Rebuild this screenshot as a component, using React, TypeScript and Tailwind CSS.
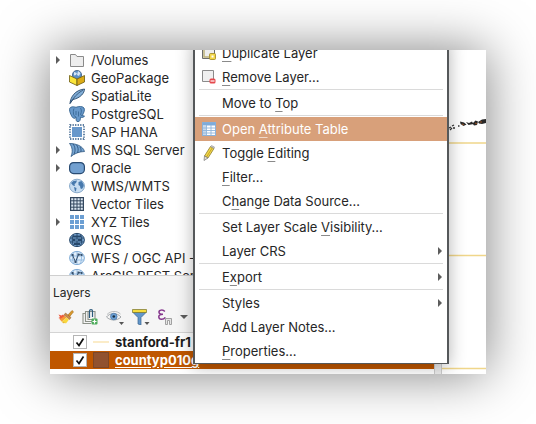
import React from "react";

function Folder() {
  return (
    <svg viewBox="0 0 16 16" className="size-4">
      <path d="M1.500 2.500h5l1.500 2h6.500v10h-13z" fill="#ededed" stroke="#8a8a8a" />
    </svg>
  );
}

function GeoPackage() {
  return (
    <svg viewBox="0 0 16 16" className="size-4">
      <circle cx="8" cy="5" r="4.600" fill="#5b8fc6" stroke="#2c4e74" strokeWidth=".7" />
      <path d="M5 2l3 1-1 2-2 .5zM9 1l2.500 2-1.500 3-2-1z" fill="#d7e6f5" />
      <path d="M.5 5.500L8 9v6.500L.5 12z" fill="#fbe53a" stroke="#6b5a10" strokeWidth=".8" />
      <path d="M15.500 5.500L8 9v6.500l7.500-3.500z" fill="#dcab16" stroke="#6b5a10" strokeWidth=".8" />
    </svg>
  );
}

function Feather() {
  return (
    <svg viewBox="0 0 16 16" className="size-4">
      <path d="M1 15.500C1.500 9 6 2 15.500 1c0 4-4 9-11.500 10.500z" fill="#83afd8" stroke="#29496b" strokeWidth=".9" />
      <path d="M1 15.500C4 10 8 5.500 14 2" fill="none" stroke="#29496b" strokeWidth=".8" />
    </svg>
  );
}

function Elephant() {
  return (
    <svg viewBox="0 0 16 16" className="size-4">
      <path
        d="M2 1.200C4 .3 5.500 1 7 1.300 9.500.3 13.500 0 15 2c1.200 2-.5 5.500-1.800 7.500 1 .5 2 .2 2.300.5-.5 1.300-2.500 1.800-4 1.200-.2 2.500-.3 4.300-2.500 4.500-2 0-2-2-2-4.500-.5.800-1.500 1.500-2.500 1C2.500 11 .5 6 .5 3.500c0-1 .5-2 1.500-2.300z"
        fill="#6899cb"
        stroke="#34638f"
        strokeWidth=".9"
      />
      <path d="M5 2.500c-1 2-.6 4-.4 6 .1 1.500 1.400 1.500 2.400 2.500M11.500 2c1.200 2 1 4 .2 6-.3 1 .2 1.500 1.500 1.500M7 5v4M9.500 5.500v5" fill="none" stroke="#34638f" strokeWidth=".8" />
    </svg>
  );
}

function Chip() {
  return (
    <svg viewBox="0 0 16 16" className="size-4">
      <rect x="3" y="3" width="10" height="10" fill="#6898cb" />
      <rect x="1" y="1" width="14" height="14" fill="none" stroke="#24507f" strokeWidth="1.400" strokeDasharray="1.300 1.240" />
    </svg>
  );
}

function SqlServer() {
  return (
    <svg viewBox="0 0 16 16" className="size-4">
      <path d="M.5 1.500C7 1.500 14 4 15.500 9.500 11 9.500 5 11.500 2 14.500 4 10 3.500 5 .5 1.500z" fill="#77a5d2" stroke="#2c557f" strokeWidth=".8" />
      <path d="M4 2c2.500 3 2.500 7 1 10.500M7.500 3c2 2.500 2 5 1 8M11 5c1.200 2 1.200 3.500.8 5" fill="none" stroke="#2c557f" strokeWidth=".9" />
    </svg>
  );
}

function Oracle() {
  return (
    <svg viewBox="0 0 16 16" className="size-4">
      <rect x=".6" y="2.600" width="14.800" height="11" rx="4" fill="#72a0d0" stroke="#2a4c73" strokeWidth="1.200" />
    </svg>
  );
}

function Globe() {
  return (
    <svg viewBox="0 0 16 16" className="size-4">
      <ellipse cx="8" cy="8" rx="7.500" ry="6.800" fill="#c6dcf1" stroke="#7098bf" strokeWidth=".8" />
      <path d="M2 5l2.500-2L8 2.500 7 5 5.500 6 6 8 4 7.500zM5 9l2.500 1L7 13l-1 .5zM9.500 4l3-1 2 3 .3 2-1.800 3-1.500-.5L11 8 9.500 7zM12 12l1-1" fill="#4779ad" />
    </svg>
  );
}

function VectorTiles() {
  return (
    <svg viewBox="0 0 16 16" className="size-4">
      <rect x="1.600" y="1.600" width="12.800" height="12.800" fill="#dbe7f2" stroke="#33475e" strokeWidth="1.200" />
      <path d="M4.800 1v14M8 1v14M11.200 1v14M1 4.800h14M1 8h14M1 11.200h14" stroke="#33475e" strokeWidth="1" />
    </svg>
  );
}

function XyzTiles() {
  return (
    <svg viewBox="0 0 16 16" className="size-4" fill="#6c9fd3">
      {[1, 6, 11].map((y) => [1, 6, 11].map((x) => <rect key={`${x}-${y}`} x={x} y={y} width="4" height="4" />))}
    </svg>
  );
}

function DarkGlobe() {
  return (
    <svg viewBox="0 0 16 16" className="size-4">
      <ellipse cx="8" cy="8" rx="7.400" ry="6.600" fill="#7fabd8" stroke="#27486b" strokeWidth="1" />
      <path d="M1 6h14M1 10h14M8 1.500v13M4.500 2.500c-1.800 3.500-1.800 7.500 0 11M11.500 2.500c1.800 3.500 1.800 7.500 0 11" fill="none" stroke="#27486b" strokeWidth="1" />
      <path d="M4 3.500h8v1.500H4zM3.500 7h3v2h-3zM9 7h4v2H9zM5 11h6v2H5z" fill="#27486b" />
    </svg>
  );
}

function FeatureGlobe() {
  return (
    <svg viewBox="0 0 16 16" className="size-4">
      <ellipse cx="8" cy="8" rx="7.400" ry="6.600" fill="#e3effa" stroke="#6fa0d0" strokeWidth=".9" />
      <path d="M1 6h14M1 10h14M8 1.500v13M5 2c-2 4-2 8 0 12M11 2c2 4 2 8 0 12" fill="none" stroke="#86b1dc" strokeWidth=".8" />
      <path d="M3.500 5l3 7 3-7.500 3 .5" fill="none" stroke="#35506e" strokeWidth="1" />
      <path d="M2.500 4h2v2h-2zM5.500 11h2v2h-2zM8.500 3.500h2v2h-2zM12 4h1.500v2H12z" fill="#35506e" />
    </svg>
  );
}

function Triangle() {
  return (
    <svg viewBox="0 0 4 8" className="h-2 w-1" fill="#5c5c5c">
      <path d="M0 0l4 4-4 4z" />
    </svg>
  );
}

function Brush() {
  return (
    <svg viewBox="0 0 16 16" className="size-4">
      <path d="M9.500 6.500L14 1.500l1.500 1.300-4 5z" fill="#d99a2b" stroke="#a56a13" strokeWidth=".6" />
      <path d="M7.500 4l5.500 4.500-1.500 2-5.500-4.500z" fill="#c98a4a" stroke="#8d5a25" strokeWidth=".5" />
      <path d="M.5 5.500l3 1L5 5.500l2 2-3.500 3-3-1.500 1.500-1z" fill="#ef5b3c" />
      <path d="M6.500 7l2 1.500-4.500 4-2.500-2z" fill="#f59a36" />
      <path d="M8.500 8.500l2.500 2-3 4-4-2z" fill="#f8d83f" />
      <path d="M3 12.500l4 .5-1 1.500z" fill="#e8b52f" />
    </svg>
  );
}

function AddGroup() {
  return (
    <svg viewBox="0 0 16 16" className="size-4">
      <path d="M3.500 4.500H1v10h8M5.500 2.500h-2v10h7M6 2.500h7v8H6z" fill="none" stroke="#8c9188" strokeWidth="1.100" />
      <path d="M7.500 9V2c0-1.800 3-1.800 3 0v6" fill="none" stroke="#2c5a7c" strokeWidth="1.200" />
      <rect x="9.500" y="9.500" width="6" height="6" rx="1" fill="#4dab5a" />
      <path d="M12.500 10.500v4M10.500 12.500h4" stroke="#fff" strokeWidth="1.200" />
    </svg>
  );
}

function Eye() {
  return (
    <svg viewBox="0 0 18 16" className="h-4 w-[18px]">
      <path d="M.5 8C4 3.500 11 3.500 15 8 11 12 4.500 12 .5 8z" fill="#f4f4f4" stroke="#9a9ea1" strokeWidth=".9" />
      <path d="M1 5.500C5 1.500 11 1.500 14.500 5" fill="none" stroke="#b0b3b5" strokeWidth=".9" />
      <circle cx="7.800" cy="7.500" r="3.300" fill="#6ba0d5" stroke="#4a76a5" strokeWidth=".7" />
      <circle cx="7.800" cy="7.500" r="1.300" fill="#1c2f42" />
      <path d="M13 13h5l-2.500 3z" fill="#555" />
    </svg>
  );
}

function Funnel() {
  return (
    <svg viewBox="0 0 18 16" className="h-4 w-[18px]">
      <path d="M1 3.500l5 5V15l3 1V8.500l5-5z" fill="#6296c9" stroke="#39648f" strokeWidth=".7" />
      <path d="M.5.500h14v3H.5z" fill="#f6dc3c" stroke="#77732a" strokeWidth=".7" />
      <path d="M12.500 13h5L15 16z" fill="#555" />
    </svg>
  );
}

function Epsilon() {
  return (
    <svg viewBox="1 0 14 16" className="h-4 w-3.5">
      <path d="M7.800 2.500C6 .3 1.800.8 2 3.200 2 5 4 5.200 6 5.200 3.500 5.200 1.700 6 1.800 8c.2 3 4.700 3 6.500.3" fill="none" stroke="#84358c" strokeWidth="1.500" />
      <path d="M8.500 15.500v-6h6v6h-2v-4h-2v4z" fill="#e5e5e5" stroke="#999" strokeWidth=".9" />
    </svg>
  );
}

function DownArrow() {
  return (
    <svg viewBox="0 0 8 4" className="h-1 w-2" fill="#5c5c5c">
      <path d="M0 0h8L4 4z" />
    </svg>
  );
}

function Duplicate() {
  return (
    <svg viewBox="0 0 16 16" className="size-4">
      <path d="M1.500 1h12v12.500h-12z" fill="#ededed" stroke="#6c6c6c" />
      <path d="M3 1v11h5" fill="none" stroke="#bdb27a" strokeWidth="1.500" />
      <rect x="8.500" y="8.500" width="6" height="6" rx="1" fill="#f3d64a" stroke="#9a8420" strokeWidth=".8" />
      <rect x="10.500" y="10.500" width="2" height="2" fill="#fff" />
    </svg>
  );
}

function Remove() {
  return (
    <svg viewBox="0 0 16 16" className="size-4">
      <path d="M1.500 1.500h11v11h-11z" fill="#f0f0f0" stroke="#8b8b8b" />
      <rect x="8.500" y="9.500" width="6" height="5" rx="1.500" fill="#e5484d" />
      <path d="M9.500 12h4" stroke="#fff" strokeWidth="1.200" />
    </svg>
  );
}

function TableIcon() {
  return (
    <svg viewBox="0 0 16 16" className="size-4">
      <rect x="1.500" y="1.500" width="13" height="13" fill="#fff" stroke="#8bb1d8" />
      <path d="M1.500 1.500h13v3h-13z" fill="#7eabd9" />
      <path d="M2 7h12M2 9.500h12M2 12h12M5.500 4v10M10 4v10" stroke="#8fb4da" strokeWidth=".9" />
      <path d="M2 5h3v9H2z" fill="#8fb4da" fillOpacity=".5" />
    </svg>
  );
}

function Pencil() {
  return (
    <svg viewBox="0 0 16 16" className="size-4">
      <path d="M9.500 1.500l3.500 2-6 9.500-3.500-2z" fill="#f2d74b" stroke="#8f7d2c" strokeWidth=".8" />
      <path d="M11.500 2.500l-6 9.500" stroke="#c6a526" strokeWidth="1" />
      <path d="M9.500 1.500l1-1 3 1.500-.5 1.500z" fill="#c9c9c9" stroke="#888" strokeWidth=".5" />
      <path d="M3.500 11L3 15.500 7 13z" fill="#e6dfd0" stroke="#777" strokeWidth=".7" />
    </svg>
  );
}

const sources = [
  { name: "/Volumes", Icon: Folder, open: true },
  { name: "GeoPackage", Icon: GeoPackage },
  { name: "SpatiaLite", Icon: Feather },
  { name: "PostgreSQL", Icon: Elephant },
  { name: "SAP HANA", Icon: Chip },
  { name: "MS SQL Server", Icon: SqlServer, open: true },
  { name: "Oracle", Icon: Oracle, open: true },
  { name: "WMS/WMTS", Icon: Globe },
  { name: "Vector Tiles", Icon: VectorTiles },
  { name: "XYZ Tiles", Icon: XyzTiles, open: true },
  { name: "WCS", Icon: DarkGlobe },
  { name: "WFS / OGC API -", Icon: FeatureGlobe },
  { name: "ArcGIS REST Serv", Icon: FeatureGlobe },
];

const tools = [
  { label: "Open layer styling", Icon: Brush },
  { label: "Add group", Icon: AddGroup },
  { label: "Manage map themes", Icon: Eye },
  { label: "Filter legend", Icon: Funnel },
  { label: "Filter by expression", Icon: Epsilon },
];

type Entry = { label: [string, string, string]; Icon?: () => React.JSX.Element; sub?: boolean; active?: boolean };

const groups: Entry[][] = [
  [
    { label: ["", "D", "uplicate Layer"], Icon: Duplicate },
    { label: ["", "R", "emove Layer…"], Icon: Remove },
  ],
  [{ label: ["Move to ", "T", "op"] }],
  [
    { label: ["Open ", "A", "ttribute Table"], Icon: TableIcon, active: true },
    { label: ["Toggle ", "E", "diting"], Icon: Pencil },
    { label: ["", "F", "ilter…"] },
    { label: ["C", "h", "ange Data Source…"] },
  ],
  [{ label: ["Set Layer Scale ", "V", "isibility…"] }, { label: ["Layer CRS", "", ""], sub: true }],
  [{ label: ["E", "x", "port"], sub: true }],
  [
    { label: ["Styles", "", ""], sub: true },
    { label: ["Add Layer Notes…", "", ""] },
    { label: ["", "P", "roperties…"] },
  ],
];

function ContextMenu() {
  return (
    <div
      role="menu"
      className="absolute bottom-[10px] left-[143px] w-64 border-2 border-b border-[#55585a] bg-white shadow-[0_2px_16px_rgba(0,0,0,0.3)]"
    >
      {groups.map((group, g) => (
        <div key={g} role="group">
          {g > 0 && <hr className="mx-1 h-0.5 border-0 border-t border-t-[#dadada]" />}
          {group.map(({ label, Icon, sub, active }) => (
            <button
              key={label.join("")}
              role="menuitem"
              className={`flex h-6 w-full items-center pr-[5px] pl-1.5 text-left ${active ? "bg-[#d8a07a] text-white" : ""}`}
            >
              <span className="mr-[5px] flex w-4 shrink-0">{Icon && <Icon />}</span>
              <span className="flex-1 whitespace-pre">
                {label[0]}
                {label[1] && (
                  <u className={`decoration-1 underline-offset-3 ${active ? "decoration-[#f0d9ca]" : "decoration-[#8a8a8a]"}`}>
                    {label[1]}
                  </u>
                )}
                {label[2]}
              </span>
              {sub && <Triangle />}
            </button>
          ))}
        </div>
      ))}
    </div>
  );
}

function Check({ id }: { id: string }) {
  return (
    <span className="grid shrink-0">
      <input
        type="checkbox"
        id={id}
        defaultChecked
        className="col-start-1 row-start-1 size-3.5 appearance-none border border-[#b5b5b5] bg-white"
      />
      <svg viewBox="0 0 14 14" className="pointer-events-none col-start-1 row-start-1 size-3.5">
        <path d="M3.500 7.500l2.500 3L10.500 3.500" fill="none" stroke="#111" strokeWidth="1.700" />
      </svg>
    </span>
  );
}

export default function App() {
  return (
    <main className="bg-white p-[50px] font-['Inter','Liberation_Sans',sans-serif] text-[13px] leading-[18px] text-[#262626]">
      <div className="relative flex overflow-hidden bg-white shadow-[0_0_50px_rgba(0,0,0,0.5)]">
        <div className="flex w-96 shrink-0 flex-col">
          <ul className="h-[225px] overflow-hidden pt-px">
            {sources.map(({ name, Icon, open }) => (
              <li key={name} className="flex h-[18px] items-center whitespace-nowrap">
                <span className="flex w-[19px] shrink-0 pl-1.5">
                  {open && (
                    <button aria-label={`Expand ${name}`}>
                      <Triangle />
                    </button>
                  )}
                </span>
                <Icon />
                <span className="pl-1.5">{name}</span>
              </li>
            ))}
          </ul>
          <section className="bg-[#f5f5f5]">
            <h2 className="border-t border-[#cfcfcf] px-[3px] pt-2 text-[12px]">Layers</h2>
            <div className="flex h-[31px] items-center gap-2 border-b border-[#d4d4d4] px-2">
              {tools.map(({ label, Icon }) => (
                <button key={label} aria-label={label}>
                  <Icon />
                </button>
              ))}
              <button aria-label="More">
                <DownArrow />
              </button>
            </div>
            <ul className="bg-white pb-[5px] font-bold">
              <li className="flex h-[18px] items-center pl-[23px] text-[#1c1c1c]">
                <Check id="stanford" />
                <span className="mx-1.5 w-4 border-t-2 border-[#fbecc8]" />
                <label htmlFor="stanford">stanford-fr1</label>
              </li>
              <li className="flex h-[18px] items-center bg-[#bf5700] pl-[23px] text-white">
                <Check id="county" />
                <span className="mx-1.5 size-4 border border-[#7d4727] bg-[#91522f]" />
                <label htmlFor="county" className="underline underline-offset-2">
                  countyp010g
                </label>
              </li>
            </ul>
          </section>
        </div>
        <div className="w-2 shrink-0 border-x border-[#cccccc] bg-[#ececec]" />
        <div className="min-w-0 flex-1 overflow-hidden">
          <svg viewBox="0 0 44 324" className="h-[324px] w-11">
            <path d="M0 93h44M0 205.500h44M0 318.500h44" stroke="#f0d68a" strokeWidth="1.500" />
            <path d="M7 78l2-1M8 80l2-2M10 76l2-1M11 78l2 0M16 76h1.500" stroke="#333" strokeWidth="1.300" />
            <path d="M18 71.500l4 1 2.500 2-3 1.500-3-2zM24 72l3 1 3-1.500 1.500 2.500-5 1zM30.500 73.500l3-3 2.500 1-1 3.500-3 .5zM36 72l4-2.500 4-.5v4l-4 1-3-.5z" fill="#292929" />
            <path d="M20 74l2 1M33 73l2 1M38 72l2 0" stroke="#9b5020" strokeWidth="1" />
          </svg>
        </div>
        <ContextMenu />
      </div>
    </main>
  );
}
